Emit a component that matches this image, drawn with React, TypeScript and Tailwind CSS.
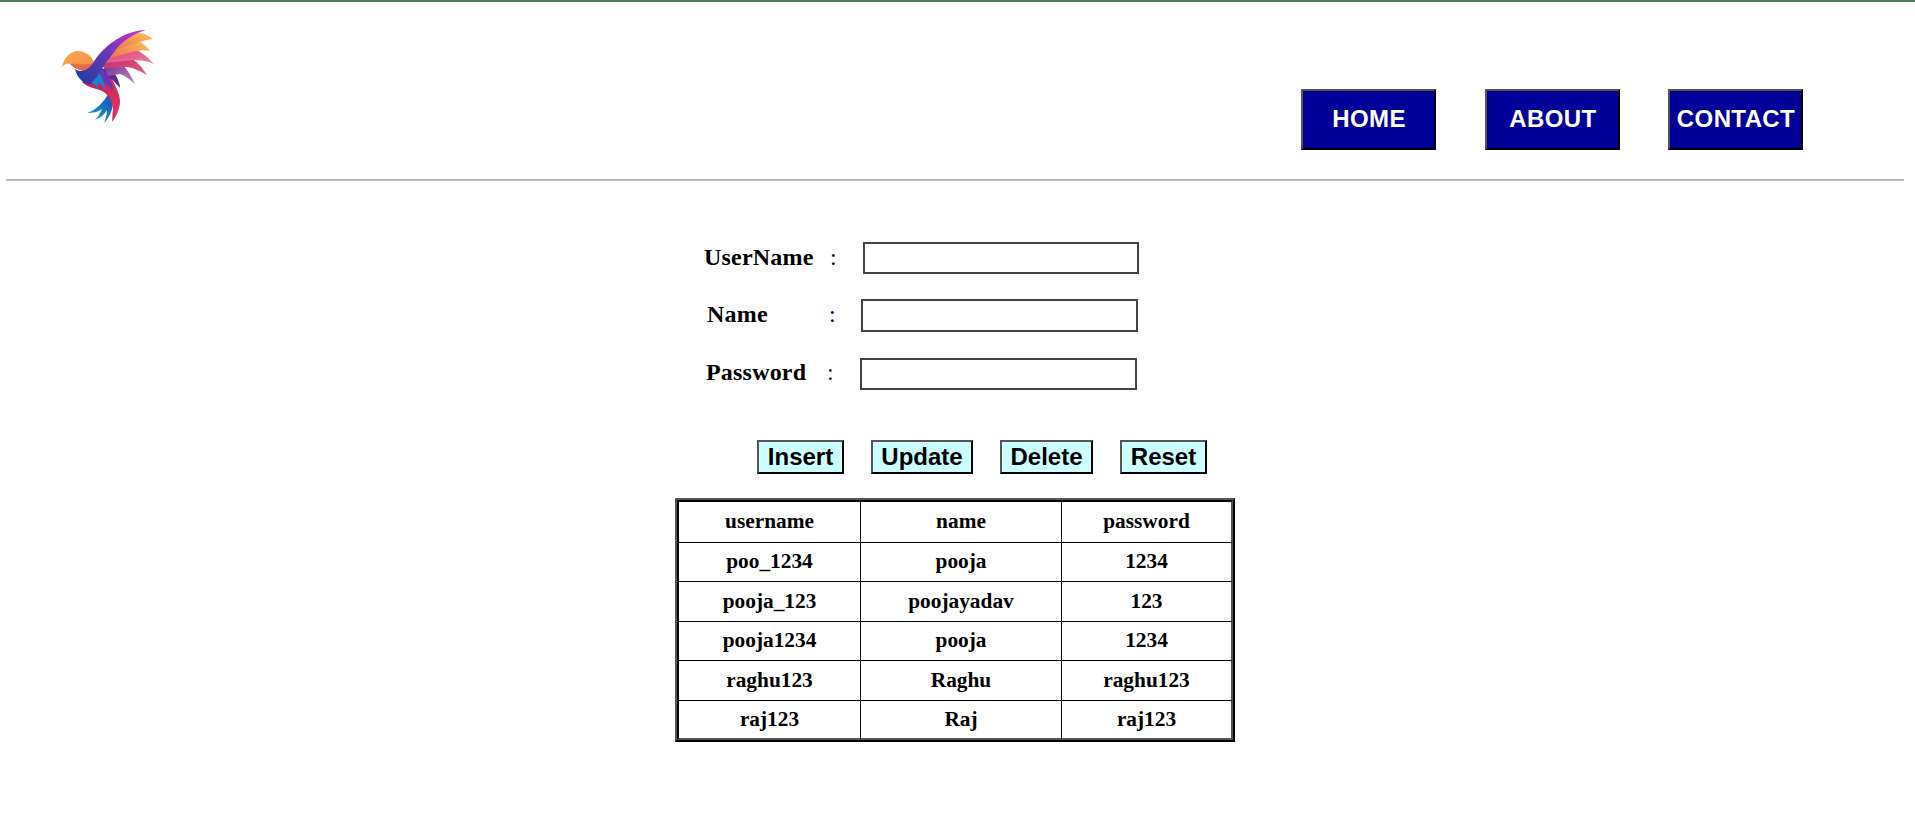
const rows = [
  ["username", "name", "password"],
  ["poo_1234", "pooja", "1234"],
  ["pooja_123", "poojayadav", "123"],
  ["pooja1234", "pooja", "1234"],
  ["raghu123", "Raghu", "raghu123"],
  ["raj123", "Raj", "raj123"],
];

const rowHeights = ["h-[43px]", "h-[39px]", "h-[40px]", "h-[39px]", "h-[40px]", "h-[39px]"];

function Bird() {
  return (
    <svg width="120" height="110" viewBox="50 20 120 110" className="block">
      <defs>
        <linearGradient id="head" x1="0" y1="0" x2="1" y2="1">
          <stop offset="0" stopColor="#fbab4c" />
          <stop offset="1" stopColor="#f58a45" />
        </linearGradient>
        <linearGradient id="wing" x1="0" y1="1" x2="1" y2="0">
          <stop offset="0" stopColor="#1b3c9c" />
          <stop offset="0.45" stopColor="#5b3ab8" />
          <stop offset="0.8" stopColor="#b32fc8" />
          <stop offset="1" stopColor="#c83ac0" />
        </linearGradient>
        <linearGradient id="top" x1="0" y1="1" x2="1" y2="0">
          <stop offset="0" stopColor="#ee6f5c" />
          <stop offset="1" stopColor="#fcc34c" />
        </linearGradient>
        <linearGradient id="pink" x1="0" y1="0" x2="1" y2="1">
          <stop offset="0" stopColor="#d93a70" />
          <stop offset="1" stopColor="#ee85a6" />
        </linearGradient>
        <linearGradient id="red" x1="0" y1="0" x2="1" y2="1">
          <stop offset="0" stopColor="#c22a62" />
          <stop offset="1" stopColor="#e8608a" />
        </linearGradient>
        <linearGradient id="mauve" x1="0" y1="0" x2="1" y2="1">
          <stop offset="0" stopColor="#6a2c96" />
          <stop offset="1" stopColor="#c98abb" />
        </linearGradient>
        <linearGradient id="belly" x1="0" y1="0" x2="1" y2="1">
          <stop offset="0" stopColor="#b01f58" />
          <stop offset="1" stopColor="#ea3260" />
        </linearGradient>
        <linearGradient id="tail" x1="1" y1="0" x2="0" y2="1">
          <stop offset="0" stopColor="#1c4fa8" />
          <stop offset="1" stopColor="#14a4de" />
        </linearGradient>
      </defs>
      {/* tail */}
      <path d="M108 94C104 102 96 110 87 113C93 113 98 112 102 109C100 114 97 118 95 120C100 118 104 115 107 110C107 115 105 120 104 123C109 118 113 110 113 102Z" fill="url(#tail)" />
      {/* belly */}
      <path d="M82 82C88 88 96 88 102 91C109 95 112 101 113 108L112 122C118 114 122 104 119 95C116 86 112 78 106 70L92 72Z" fill="url(#belly)" />
      {/* feathers, lowest first */}
      <path d="M96 68C104 68 112 70 115 74C118 79 120 84 120 88C116 84 113 80 110 78L100 80Z" fill="#5a2a8e" />
      <path d="M102 64C110 62 118 63 124 66C129 72 132 78 135 84C130 80 126 76 120 74L108 76Z" fill="url(#mauve)" />
      <path d="M104 60C114 56 124 56 132 59C139 63 143 69 147 75C140 71 134 68 127 67L104 68Z" fill="url(#red)" />
      <path d="M108 54C118 48 128 47 134 49C143 52 149 59 154 64C147 61 141 60 133 60L106 63Z" fill="url(#pink)" />
      <path d="M112 48C122 42 132 40 138 41C143 43 147 47 150 51C145 50 141 50 136 51L110 58Z" fill="url(#top)" />
      <path d="M116 42C122 37 132 33 141 33C146 34 150 37 153 39C146 40 141 41 137 43L114 50Z" fill="url(#top)" />
      {/* inner wing */}
      <path d="M100 68C107 72 112 80 113 91C109 85 105 82 98 80Z" fill="#6b35b5" />
      <path d="M90 82L98 72C102 76 105 83 105 90C102 87 100 84 99 82C98 84 98 86 97 88C96 85 94 84 90 82Z" fill="#1782cf" />
      {/* head */}
      <path d="M62 68C63 60 68 52 77 51C85 51 91 55 94 62L90 71C82 72 74 68 70 64C66 63 63 65 62 68Z" fill="url(#head)" />
      <path d="M70 64C76 63 84 66 92 63L90 71C82 72 75 69 70 64Z" fill="#e56c4a" />
      {/* wing */}
      <path d="M75 69C80 73 88 71 93 63C103 47 122 31 146 30C134 34 124 40 118 47C112 55 108 60 105 64C100 72 97 78 90 84C84 84 77 78 75 69Z" fill="url(#wing)" />
    </svg>
  );
}

function NavButton({ label }: { label: string }) {
  return (
    <button className="w-[135px] h-[61px] pb-[2px] pl-px first:mr-[1px] flex items-center justify-center bg-[#000099] text-white font-bold text-[24px] tracking-[0.4px] border-2 border-t-[#555555] border-l-[#555555] border-r-black border-b-black font-['Liberation_Sans',sans-serif]">
      {label}
    </button>
  );
}

function ActionButton({ label, width }: { label: string; width: string }) {
  return (
    <button className={width + " h-[34px] flex items-center justify-center bg-[#ccffff] text-black font-bold text-[24px] border-2 border-t-[#555555] border-l-[#555555] border-r-black border-b-black font-['Liberation_Sans',sans-serif]"}>
      {label}
    </button>
  );
}

export default function App() {
  return (
    <div className="min-h-[821px] bg-white text-black border-t-2 border-[#4f7a55] font-['Liberation_Serif',serif]">
      {/* Header */}
      <div className="h-[177px] flex justify-between items-start">
        <div className="ml-[50px] mt-[18px]">
          <Bird />
        </div>
        <div className="flex gap-[48px] mt-[87px] mr-[112px]">
          <NavButton label="HOME" />
          <NavButton label="ABOUT" />
          <NavButton label="CONTACT" />
        </div>
      </div>
      <div className="ml-[6px] mr-[11px] border-t border-b border-t-[#b4b4b4] border-b-[#c0c0c0]" />

      {/* Form */}
      <div className="mt-[61px] ml-[704px] flex items-center h-[32px]">
        <span className="w-[126px] pb-[2px] font-bold text-[24px] tracking-[0.2px]">UserName</span>
        <span className="w-[33px] pb-[2px] text-[24px]">:</span>
        <input className="w-[276px] h-[32px] border-2 border-[#444444] bg-white" />
      </div>
      <div className="mt-[25px] ml-[707px] flex items-center h-[33px]">
        <span className="w-[122px] pb-[3px] font-bold text-[24px] tracking-[0.2px]">Name</span>
        <span className="w-[32px] pb-[3px] text-[24px]">:</span>
        <input className="w-[277px] h-[33px] border-2 border-[#444444] bg-white" />
      </div>
      <div className="mt-[26px] ml-[706px] flex items-center h-[32px]">
        <span className="w-[121px] pb-[5px] font-bold text-[24px] tracking-[0.2px]">Password</span>
        <span className="w-[33px] pb-[5px] text-[24px]">:</span>
        <input className="w-[277px] h-[32px] border-2 border-[#444444] bg-white" />
      </div>

      {/* Buttons */}
      <div className="mt-[50px] ml-[757px] flex gap-[27px]">
        <ActionButton label="Insert" width="w-[87px]" />
        <ActionButton label="Update" width="w-[102px]" />
        <ActionButton label="Delete" width="w-[93px]" />
        <ActionButton label="Reset" width="w-[87px]" />
      </div>

      {/* Table */}
      <table className="mt-[24px] ml-[675px] w-[560px] table-fixed border-separate border-spacing-0 border-2 border-t-[#555555] border-l-[#555555] border-r-black border-b-black font-bold text-[21.33px]">
        <colgroup>
          <col className="w-[184px]" />
          <col className="w-[201px]" />
          <col />
        </colgroup>
        <tbody>
          {rows.map((row, i) => (
            <tr key={i} className={rowHeights[i]}>
              {row.map((cell, j) => (
                <td
                  key={j}
                  className={
                    "text-center p-0 border-black" +
                    (j === 0 ? " border-l-2" : "") +
                    (j < 2 ? " border-r" : " border-r-2 border-r-[#555555]") +
                    (i === 0 ? " border-t-2" : "") +
                    (i < rows.length - 1 ? " border-b" : " border-b-2 border-b-[#555555]")
                  }
                >
                  {cell}
                </td>
              ))}
            </tr>
          ))}
        </tbody>
      </table>
    </div>
  );
}
